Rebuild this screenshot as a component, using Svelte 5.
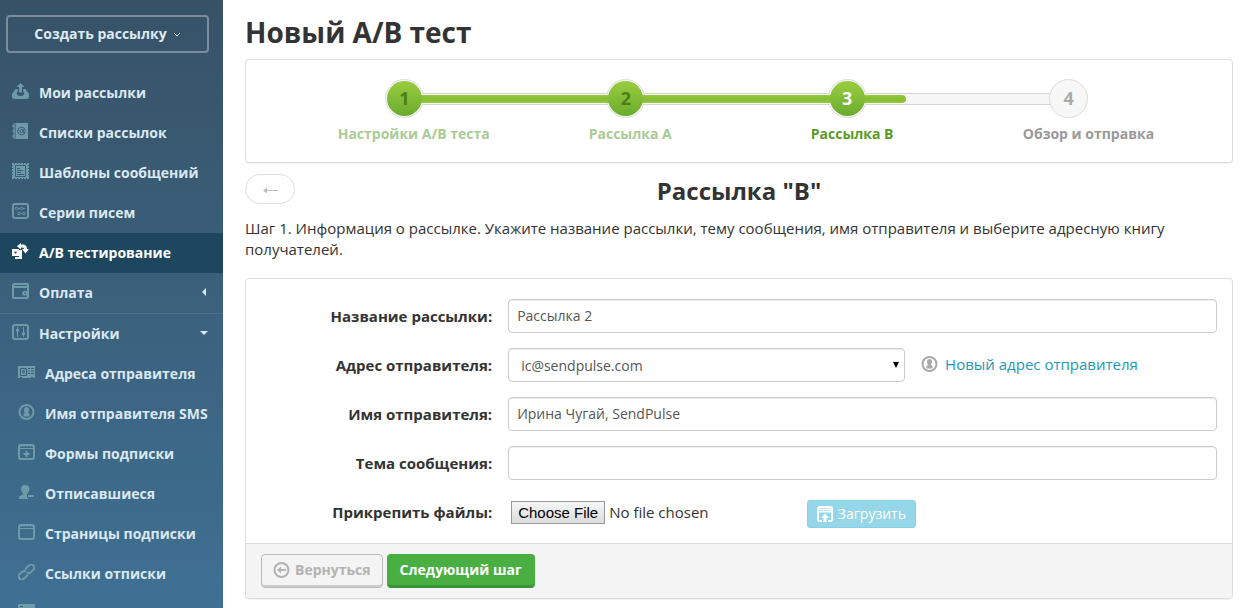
<script>
  const menu = [
    {icon: 'outbox', title: 'Мои рассылки'},
    {icon: 'book', title: 'Списки рассылок'},
    {icon: 'stamp', title: 'Шаблоны сообщений'},
    {icon: 'series', title: 'Серии писем'},
    {icon: 'ab', title: 'А/В тестирование', active: true},
    {icon: 'wallet', title: 'Оплата', caret: 'left'},
    {icon: 'sliders', title: 'Настройки', caret: 'down', divided: true},
  ];

  const submenu = [
    {icon: 'card', title: 'Адреса отправителя'},
    {icon: 'user', title: 'Имя отправителя SMS'},
    {icon: 'form', title: 'Формы подписки'},
    {icon: 'userMinus', title: 'Отписавшиеся'},
    {icon: 'page', title: 'Страницы подписки'},
    {icon: 'link', title: 'Ссылки отписки'},
    {icon: 'more', title: ''},
  ];

  const steps = [
    {number: 1, title: 'Настройки А/В теста', state: 'done'},
    {number: 2, title: 'Рассылка А', state: 'done'},
    {number: 3, title: 'Рассылка В', state: 'current'},
    {number: 4, title: 'Обзор и отправка', state: 'next'},
  ];

  let progress = $state(75.5);
  let name = $state('Рассылка 2');
  let address = $state('ic@sendpulse.com');
  let sender = $state('Ирина Чугай, SendPulse');
  let subject = $state('');
</script>

{#snippet icon(type)}
  <svg class="icon" viewBox="0 0 17 16" width="17" height="16" aria-hidden="true">
    {#if type === 'outbox'}
      <path d="M8.5 0L12.5 4H10V9.5H7V4H4.5z" />
      <path d="M3.5 6H5.8V8.5L4.5 10.5Q5.5 13 8.5 13T12.5 10.5L11.2 8.5V6H13.5L17 11V13.5Q17 16 14.5 16H2.5Q0 16 0 13.5V11z" />
    {:else if type === 'book'}
      <path d="M3.5 0H16V16H3.5zM1.5 0H2.7V16H1.5V14H0.5V12H1.5V9H0.5V7H1.5V4H0.5V2H1.5z" />
      <g class="cut">
        <circle cx="9.5" cy="8" r="3.8" />
        <circle cx="9.5" cy="8" r="1.6" />
        <path d="M11.2 6V9.5H13" />
      </g>
    {:else if type === 'stamp'}
      <path d="M1 1H16V15H1z" />
      <path class="perforation" d="M0 1H17M0 15H17M1 0V16M16 0V16" />
      <path class="cut" d="M3.5 2.5H13.5V13.5H3.5zM5 5.5H8M5 7.5H11M5 9.5H9M5 11.5H12" />
    {:else if type === 'series'}
      <rect class="line" x="1" y="1" width="15" height="14" rx="2" />
      <g class="thin">
        <circle cx="4.5" cy="5.5" r="1.3" />
        <circle cx="9.5" cy="5.5" r="1.3" />
        <circle cx="7" cy="10.5" r="1.3" />
        <circle cx="12" cy="10.5" r="1.3" />
        <path d="M6 5.5H8M11 5.5H13M8.5 10.5H10.5" />
      </g>
    {:else if type === 'ab'}
      <path d="M0 6H7V13H0zM2.5 8.5V10.5H4.5V8.5z" fill-rule="evenodd" />
      <path d="M7 7H10V16H3V14H7z" />
      <path d="M9 0V1.5H11.5Q15 2 15 6H17L13.5 10.5L10 6H12Q12 4.5 10.5 4.5H9V6.5L5 3.2z" />
    {:else if type === 'wallet'}
      <path d="M2.5 0H15Q17 0 17 2V14Q17 16 15 16H2.5Q0 16 0 13.5V2.5Q0 0 2.5 0zM2.5 2V3H15V2zM2 5V14H15V12.5H12Q10 12.5 10 10.5V10Q10 8 12 8H15V5zM12.5 9.5V11H14V9.5z" fill-rule="evenodd" />
    {:else if type === 'sliders'}
      <rect class="line" x="1" y="1" width="15" height="14" rx="2" />
      <path class="thin" d="M5.5 3V13M11.5 3V13" />
      <path d="M4 5H7V7.5H4zM10 8.5H13V11H10z" />
    {:else if type === 'card'}
      <path d="M0 2H17V14H15V13H13V14H4V13H2V14H0z" />
      <path class="cut" d="M2.5 4.5H8.5V11.5H2.5zM10 4.5H12M13 4.5H16M10 7H12M13 7H16M10 9.5H12M13 9.5H16" />
      <path class="cut" d="M5 6V9.5M6 6V9.5" />
    {:else if type === 'user'}
      <circle class="line" cx="8.5" cy="8" r="7" />
      <path d="M8.5 3Q11 3 11 6Q11 8 10 9L11.5 10V12.5H5.5V10L7 9Q6 8 6 6Q6 3 8.5 3z" />
    {:else if type === 'form'}
      <rect class="line" x="1" y="1" width="15" height="14" rx="2" />
      <path d="M2 4H15V5H2z" />
      <path d="M7.5 7H9.5V9H11.5V11H9.5V13H7.5V11H5.5V9H7.5z" />
      <path class="dots" d="M2 2.5H15" />
    {:else if type === 'userMinus'}
      <path d="M7 1Q11.5 1 11.5 5Q11.5 7.5 9.5 9.5V10H9V14H10V15H1V13Q1 12 5 10.5V9.5Q3 7.5 3 5Q3 1 7 1z" />
      <path d="M10 11H16V13H10z" />
    {:else if type === 'page'}
      <rect class="line" x="1" y="1" width="15" height="14" rx="2" />
      <path d="M2 4H15V5H2z" />
      <path class="dots" d="M2 2.5H15" />
    {:else if type === 'link'}
      <g class="chain" transform="rotate(-43 8.5 8)">
        <path d="M7.5 10.2Q7 11 6 11H1.5Q-1 11 -1 8T1.5 5H5.5Q8 5 8.2 7.5" />
        <path d="M9.5 5.8Q10 5 11 5H15.5Q18 5 18 8T15.5 11H11.5Q9 11 8.8 8.5" />
      </g>
    {:else if type === 'back'}
      <circle class="line" cx="8.5" cy="8" r="7" />
      <path d="M4 8L8 4.5V7H13V9H8V11.5z" />
    {:else if type === 'upload'}
      <path d="M3 0H13Q16 0 16 3V13Q16 16 13 16H11V14H14V6.5H2V14H5V16H3Q0 16 0 13V3Q0 0 3 0z" />
      <path d="M8 7.5L12 12H9.5V16H6.5V12H4z" />
      <path class="header" d="M2 2.5H14M2 4.5H14" />
    {:else if type === 'more'}
      <path d="M1 0H16L17 1V16H0V1z" />
      <path class="cut" d="M2 2.5H5" />
    {/if}
  </svg>
{/snippet}

<div class="app">
  <aside class="sidebar">
    <button class="create-btn" type="button">
      Создать рассылку
      <svg viewBox="0 0 8 6" width="8" height="6" aria-hidden="true"><path d="M1 1L4 4L7 1" /></svg>
    </button>

    <nav>
      {#each menu as item (item.icon)}
        <a class="menu-item" class:active={item.active} class:divided={item.divided} href="#{item.icon}">
          {@render icon(item.icon)}
          <span class="menu-title">{item.title}</span>
          {#if item.caret}
            <span class="caret {item.caret}"></span>
          {/if}
        </a>
      {/each}
      {#each submenu as item (item.icon)}
        <a class="menu-item sub" href="#{item.icon}">
          {@render icon(item.icon)}
          <span class="menu-title">{item.title}</span>
        </a>
      {/each}
    </nav>
  </aside>

  <main>
    <h1>Новый А/В тест</h1>

    <section class="panel wizard">
      <div class="progress">
        <div class="track"></div>
        <div class="bar"><div class="fill" style="width: {progress}%"></div></div>
        <ol class="steps">
          {#each steps as step (step.number)}
            <li class="step {step.state}"><span class="disc">{step.number}</span></li>
          {/each}
        </ol>
      </div>
      <div class="step-titles">
        {#each steps as step (step.number)}
          <span class="step-title {step.state}">{step.title}</span>
        {/each}
      </div>
    </section>

    <div class="sub-header">
      <button class="pill" type="button" aria-label="Вернуться">
        <svg viewBox="0 0 16 8" width="16" height="8" aria-hidden="true">
          <path d="M1 4.5H15" /><path class="head" d="M0 4.5L4 1.5V7.5z" />
        </svg>
      </button>
      <h2>Рассылка "В"</h2>
    </div>

    <p class="hint">Шаг 1. Информация о рассылке. Укажите название рассылки, тему сообщения, имя отправителя и выберите адресную книгу получателей.</p>

    <form class="panel" onsubmit={(e) => e.preventDefault()}>
      <div class="fields">
        <div class="row">
          <label for="name">Название рассылки:</label>
          <input class="control" id="name" type="text" bind:value={name} />
        </div>
        <div class="row">
          <label for="address">Адрес отправителя:</label>
          <div class="group">
            <div class="select-wrap">
              <select class="control" id="address" bind:value={address}>
                <option value="ic@sendpulse.com">ic@sendpulse.com</option>
              </select>
              <svg class="arrow" viewBox="0 0 6 6" width="6" height="6" aria-hidden="true"><path d="M0 0H6L3 6z" /></svg>
            </div>
            <a class="new-address" href="#new-address">
              {@render icon('user')}
              <span>Новый адрес отправителя</span>
            </a>
          </div>
        </div>
        <div class="row">
          <label for="sender">Имя отправителя:</label>
          <input class="control" id="sender" type="text" bind:value={sender} />
        </div>
        <div class="row">
          <label for="subject">Тема сообщения:</label>
          <input class="control" id="subject" type="text" bind:value={subject} />
        </div>
        <div class="row">
          <label for="files">Прикрепить файлы:</label>
          <div class="group">
            <input class="file" id="files" type="file" />
            <button class="upload-btn" type="button">
              {@render icon('upload')}
              Загрузить
            </button>
          </div>
        </div>
      </div>

      <div class="form-footer">
        <button class="btn back" type="button">
          {@render icon('back')}
          Вернуться
        </button>
        <button class="btn next" type="submit">Следующий шаг</button>
      </div>
    </form>
  </main>
</div>

<style>
  :global(body) {
    margin: 0;
    background: #fff;
  }

  .app {
    display: flex;
    height: 100vh;
    overflow: hidden;
    color: #333;
    font-family: 'Open Sans', 'Noto Sans', sans-serif;
    font-size: 15px;
    line-height: 21px;
  }

  .app *,
  .app *::before {
    box-sizing: border-box;
  }

  button,
  input,
  select {
    margin: 0;
    font-family: inherit;
  }

  button {
    cursor: pointer;
  }

  .icon {
    display: block;
    flex: none;
    fill: currentColor;
  }

  .icon .line,
  .icon .thin,
  .icon .chain {
    fill: none;
    stroke: currentColor;
    stroke-width: 2;
  }

  .icon .thin {
    stroke-width: 1;
  }

  .icon .cut {
    fill: none;
    stroke: #3b5f79;
    stroke-width: 1;
  }

  .icon .dots {
    stroke: currentColor;
    stroke-dasharray: 2 1;
    opacity: 0.6;
  }

  .icon .perforation {
    fill: none;
    stroke: currentColor;
    stroke-width: 2;
    stroke-dasharray: 2 1;
  }

  .icon .header {
    stroke: #96d6e9;
    stroke-width: 1;
    opacity: 0.6;
  }

  .sidebar {
    flex: none;
    width: 223px;
    overflow: hidden;
    background: linear-gradient(#375267, #3f7093);
  }

  .create-btn {
    display: flex;
    align-items: center;
    justify-content: center;
    gap: 6px;
    width: 203px;
    height: 38px;
    margin: 15px 6px 20px;
    padding: 0 0 2px;
    border: 2px solid #7b8d9c;
    border-radius: 4px;
    background: none;
    color: #dfeaf1;
    font-size: 14px;
    font-weight: 700;
  }

  .create-btn svg {
    margin-top: 4px;
    fill: none;
    stroke: currentColor;
  }

  .menu-item {
    display: flex;
    align-items: center;
    gap: 10px;
    height: 40px;
    padding: 0 15px 2px 12px;
    color: #6f9aa9;
    text-decoration: none;
  }

  .menu-item .icon {
    margin-bottom: 2px;
  }

  .menu-item.sub {
    padding-left: 18px;
  }

  .menu-item.divided {
    height: 41px;
    border-top: 1px solid #4a6f8a;
  }

  .menu-item.active {
    background: #1c475e;
    color: #fff;
  }

  .menu-title {
    flex: 1;
    color: #dbe8f0;
    font-size: 14px;
    font-weight: 700;
    white-space: nowrap;
  }

  .active .menu-title {
    color: #fff;
  }

  .caret {
    border: 4px solid transparent;
  }

  .caret.left {
    margin-right: 2px;
    border-right-color: #dbe8f0;
    border-left-width: 0;
  }

  .caret.down {
    border-top-color: #dbe8f0;
    border-bottom-width: 0;
  }

  main {
    flex: 1;
    min-width: 0;
    padding: 14px 14px 9px 22px;
  }

  h1,
  h2 {
    margin: 0;
    font-weight: 700;
  }

  h1 {
    margin-bottom: 9px;
    font-size: 28px;
    line-height: 36px;
  }

  .panel {
    border: 1px solid #ddd;
    border-radius: 4px;
    background: #fff;
    box-shadow: 0 1px 1px rgba(0, 0, 0, 0.05);
  }

  .wizard {
    padding: 19px 0 18px;
  }

  .progress {
    position: relative;
    margin: 0 14.6% 6px 14.1%;
  }

  .track,
  .bar {
    position: absolute;
    right: 20px;
    left: 20px;
  }

  .track {
    top: 14px;
    height: 12px;
    border: 1px solid #d5d5d5;
    background: #f7f7f7;
  }

  .bar {
    z-index: 2;
    top: 16px;
    height: 8px;
  }

  .fill {
    height: 8px;
    border-radius: 0 4px 4px 0;
    background: linear-gradient(#98cc41, #88c037 30%, #86bf36 70%, #98cc41);
  }

  .steps {
    display: flex;
    justify-content: space-between;
    margin: 0;
    padding: 0;
    list-style: none;
  }

  .step {
    display: grid;
    width: 39px;
    height: 39px;
    place-items: center;
  }

  .step::before,
  .disc {
    grid-area: 1 / 1;
    border-radius: 50%;
  }

  .step::before {
    z-index: 1;
    width: 39px;
    height: 39px;
    border: 1px solid #ddd;
    background: #f7f7f7;
    content: '';
  }

  .disc {
    z-index: 3;
    width: 35px;
    height: 35px;
    background: linear-gradient(#9acd40, #6aab2d);
    color: #4b7f16;
    font-size: 18px;
    font-weight: 700;
    line-height: 35px;
    text-align: center;
  }

  .current .disc {
    color: #fff;
  }

  .next .disc {
    background: none;
    color: #aaa;
  }

  .step-titles {
    display: grid;
    grid-template-columns: 251fr 222fr 212fr 131fr;
    margin: 0 7.9% 0 9.3%;
    font-size: 14px;
    font-weight: 700;
    line-height: 20px;
    white-space: nowrap;
  }

  .step-title.done {
    color: #a9cb95;
  }

  .step-title.current {
    color: #5b9a27;
  }

  .step-title.next {
    color: #999;
  }

  .sub-header {
    display: grid;
    grid-template-columns: 50px 1fr 50px;
    align-items: start;
    margin: 11px 0 11px;
  }

  .pill {
    display: grid;
    height: 30px;
    padding: 1px 0 0 1px;
    border: 1px solid #ddd;
    border-radius: 15px;
    background: #fff;
    place-items: center;
  }

  .pill path {
    fill: none;
    stroke: #bbb;
  }

  .pill .head {
    fill: #bbb;
    stroke: none;
  }

  h2 {
    font-size: 24px;
    line-height: 33px;
    text-align: center;
  }

  .hint {
    margin: 0 0 18px;
  }

  .fields {
    display: flex;
    flex-direction: column;
    gap: 15px;
    padding: 20px 15px 14px 0;
  }

  .row {
    display: grid;
    grid-template-columns: 27% 1fr;
    align-items: center;
  }

  .row label {
    padding-right: 16px;
    font-weight: 700;
    text-align: right;
  }

  .control {
    width: 100%;
    height: 34px;
    padding: 0 8px 2px;
    border: 1px solid #ccc;
    border-radius: 4px;
    background: #fff;
    box-shadow: inset 0 1px 1px rgba(0, 0, 0, 0.075);
    color: #555;
    font-size: 14px;
  }

  select.control {
    padding: 0 12px;
    appearance: none;
  }

  .group {
    display: flex;
    align-items: center;
    height: 34px;
  }

  .select-wrap {
    position: relative;
    width: 56%;
    margin-right: 16px;
  }

  .arrow {
    position: absolute;
    top: 14px;
    right: 6px;
    fill: #000;
    pointer-events: none;
  }

  .new-address {
    display: flex;
    align-items: center;
    gap: 7px;
    padding-bottom: 2px;
    color: #1c98b6;
    text-decoration: none;
  }

  .new-address .icon {
    color: #aaa;
  }

  .file {
    width: 42%;
    padding-left: 3px;
    color: #333;
    font-size: 15px;
  }

  .file::file-selector-button {
    height: 23px;
    margin: 0 4px 0 0;
    padding: 0 6px;
    border: 1px solid #999;
    border-radius: 0;
    background: linear-gradient(#f6f6f6, #dcdcdc);
    color: #000;
    font-family: 'Liberation Sans', Arial, sans-serif;
    font-size: 15px;
  }

  .upload-btn {
    display: flex;
    align-items: center;
    gap: 4px;
    height: 28px;
    margin: 3px 0 0 1px;
    padding: 0 9px;
    border: 1px solid #88d0e5;
    border-radius: 3px;
    background: #96d6e9;
    color: #fff;
    font-size: 14px;
  }

  .form-footer {
    display: flex;
    gap: 4px;
    padding: 10px 15px;
    border-top: 1px solid #ddd;
    border-radius: 0 0 4px 4px;
    background: #f4f4f4;
  }

  .btn {
    display: flex;
    align-items: center;
    gap: 5px;
    height: 34px;
    padding: 0 12px 3px;
    border: 1px solid #bbb;
    border-radius: 4px;
    font-size: 14px;
    font-weight: 700;
  }

  .btn.back {
    padding: 0 11px 3px;
    background: #f4f4f4;
    box-shadow: inset 0 -2px 0 #ccc;
    color: #b3b3b3;
  }

  .btn.next {
    border-color: #4aaf42;
    border-bottom-color: #3c9335;
    background: #4aaf42;
    box-shadow: inset 0 -2px 0 #3c9335;
    color: #fff;
  }
</style>
